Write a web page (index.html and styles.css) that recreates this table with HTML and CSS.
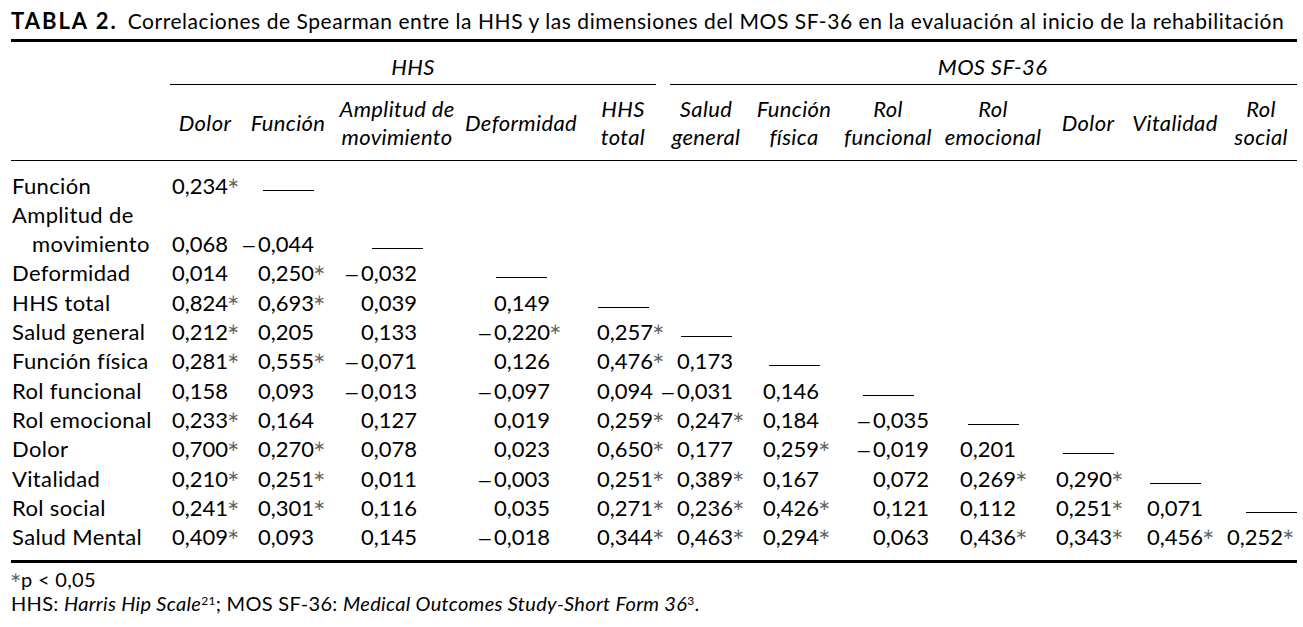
FILE: index.html
```html
<!DOCTYPE html>
<html lang="es">
<head>
<meta charset="utf-8">
<title>Tabla 2</title>
<link rel="stylesheet" href="styles.css">
</head>
<body>
<div class="page">
  <p class="title"><b>TABLA 2.</b> Correlaciones de Spearman entre la HHS y las dimensiones del MOS SF-36 en la evaluación al inicio de la rehabilitación</p>
  <table class="corr">
    <colgroup>
      <col class="c-label"><col class="c1"><col class="c2"><col class="c3"><col class="c4"><col class="c5"><col class="c6"><col class="c7"><col class="c8"><col class="c9"><col class="c10"><col class="c11"><col class="c12">
    </colgroup>
    <thead>
      <tr class="grp">
        <th></th>
        <th colspan="5" class="g-hhs"><div>HHS</div></th>
        <th colspan="7" class="g-mos"><div>MOS SF-36</div></th>
      </tr>
      <tr class="cols">
        <th></th>
        <th>Dolor</th>
        <th>Función</th>
        <th>Amplitud de<br>movimiento</th>
        <th>Deformidad</th>
        <th>HHS<br>total</th>
        <th>Salud<br>general</th>
        <th>Función<br>física</th>
        <th>Rol<br>funcional</th>
        <th>Rol<br>emocional</th>
        <th>Dolor</th>
        <th>Vitalidad</th>
        <th>Rol<br>social</th>
      </tr>
    </thead>
    <tbody>
      <tr class="first"><td>Función</td><td>0,234<span class="s">∗</span></td><td class="d"><span class="dash"></span></td><td></td><td></td><td></td><td></td><td></td><td></td><td></td><td></td><td></td><td></td></tr>
      <tr><td>Amplitud de</td><td></td><td></td><td></td><td></td><td></td><td></td><td></td><td></td><td></td><td></td><td></td><td></td></tr>
      <tr><td class="ind">movimiento</td><td>0,068</td><td><span class="m">–</span>0,044</td><td class="d"><span class="dash"></span></td><td></td><td></td><td></td><td></td><td></td><td></td><td></td><td></td><td></td></tr>
      <tr><td>Deformidad</td><td>0,014</td><td>0,250<span class="s">∗</span></td><td><span class="m">–</span>0,032</td><td class="d"><span class="dash"></span></td><td></td><td></td><td></td><td></td><td></td><td></td><td></td><td></td></tr>
      <tr><td>HHS total</td><td>0,824<span class="s">∗</span></td><td>0,693<span class="s">∗</span></td><td>0,039</td><td>0,149</td><td class="d"><span class="dash"></span></td><td></td><td></td><td></td><td></td><td></td><td></td><td></td></tr>
      <tr><td>Salud general</td><td>0,212<span class="s">∗</span></td><td>0,205</td><td>0,133</td><td><span class="m">–</span>0,220<span class="s">∗</span></td><td>0,257<span class="s">∗</span></td><td class="d"><span class="dash"></span></td><td></td><td></td><td></td><td></td><td></td><td></td></tr>
      <tr><td>Función física</td><td>0,281<span class="s">∗</span></td><td>0,555<span class="s">∗</span></td><td><span class="m">–</span>0,071</td><td>0,126</td><td>0,476<span class="s">∗</span></td><td>0,173</td><td class="d"><span class="dash"></span></td><td></td><td></td><td></td><td></td><td></td></tr>
      <tr><td>Rol funcional</td><td>0,158</td><td>0,093</td><td><span class="m">–</span>0,013</td><td><span class="m">–</span>0,097</td><td>0,094</td><td><span class="m">–</span>0,031</td><td>0,146</td><td class="d"><span class="dash"></span></td><td></td><td></td><td></td><td></td></tr>
      <tr><td>Rol emocional</td><td>0,233<span class="s">∗</span></td><td>0,164</td><td>0,127</td><td>0,019</td><td>0,259<span class="s">∗</span></td><td>0,247<span class="s">∗</span></td><td>0,184</td><td><span class="m">–</span>0,035</td><td class="d"><span class="dash"></span></td><td></td><td></td><td></td></tr>
      <tr><td>Dolor</td><td>0,700<span class="s">∗</span></td><td>0,270<span class="s">∗</span></td><td>0,078</td><td>0,023</td><td>0,650<span class="s">∗</span></td><td>0,177</td><td>0,259<span class="s">∗</span></td><td><span class="m">–</span>0,019</td><td>0,201</td><td class="d"><span class="dash"></span></td><td></td><td></td></tr>
      <tr><td>Vitalidad</td><td>0,210<span class="s">∗</span></td><td>0,251<span class="s">∗</span></td><td>0,011</td><td><span class="m">–</span>0,003</td><td>0,251<span class="s">∗</span></td><td>0,389<span class="s">∗</span></td><td>0,167</td><td>0,072</td><td>0,269<span class="s">∗</span></td><td>0,290<span class="s">∗</span></td><td class="d"><span class="dash"></span></td><td></td></tr>
      <tr><td>Rol social</td><td>0,241<span class="s">∗</span></td><td>0,301<span class="s">∗</span></td><td>0,116</td><td>0,035</td><td>0,271<span class="s">∗</span></td><td>0,236<span class="s">∗</span></td><td>0,426<span class="s">∗</span></td><td>0,121</td><td>0,112</td><td>0,251<span class="s">∗</span></td><td>0,071</td><td class="d"><span class="dash"></span></td></tr>
      <tr class="last"><td>Salud Mental</td><td>0,409<span class="s">∗</span></td><td>0,093</td><td>0,145</td><td><span class="m">–</span>0,018</td><td>0,344<span class="s">∗</span></td><td>0,463<span class="s">∗</span></td><td>0,294<span class="s">∗</span></td><td>0,063</td><td>0,436<span class="s">∗</span></td><td>0,343<span class="s">∗</span></td><td>0,456<span class="s">∗</span></td><td>0,252<span class="s">∗</span></td></tr>
    </tbody>
  </table>
  <div class="notes">
    <p><span class="fs">∗</span>p &lt; 0,05</p>
    <p>HHS: <i>Harris Hip Scale</i><sup>21</sup>; MOS SF-36: <i>Medical Outcomes Study-Short Form 36</i><sup>3</sup>.</p>
  </div>
</div>
</body>
</html>
```

FILE: styles.css
```css
html, body {
  margin: 0;
  padding: 0;
  background: #fff;
}

body {
  font-family: Lato, "Liberation Sans", sans-serif;
  color: #000;
}

.page {
  padding: 6px 0 0 11px;
  width: 1286px;
}

.title {
  margin: 0 0 4px 0;
  font-size: 21px;
  line-height: 29px;
  letter-spacing: 0.55px;
  white-space: nowrap;
}

.title b {
  font-weight: 700;
  font-size: 22px;
  letter-spacing: 2px;
  margin-right: 4px;
}

.corr {
  border-collapse: collapse;
  table-layout: fixed;
  width: 1286px;
  font-size: 22px;
  border-top: 3px solid #000;
  border-bottom: 3px solid #000;
}

.c-label { width: 156px; }
.c1 { width: 76px; }
.c2 { width: 90px; }
.c3 { width: 128px; }
.c4 { width: 120px; }
.c5 { width: 84px; }
.c6 { width: 82px; }
.c7 { width: 94px; }
.c8 { width: 94px; }
.c9 { width: 116px; }
.c10 { width: 74px; }
.c11 { width: 100px; }
.c12 { width: 72px; }

.corr th {
  font-weight: 400;
  font-style: italic;
  padding: 0;
  line-height: 28px;
  letter-spacing: 0.35px;
  text-align: center;
  vertical-align: middle;
  white-space: nowrap;
}

.grp th {
  padding-top: 11px;
}

.grp th div {
  border-bottom: 1.5px solid #000;
  padding-bottom: 3px;
}

.g-hhs { padding-left: 3px !important; padding-right: 9px !important; }
.g-mos { padding-left: 5px !important; }
.g-mos div { padding-left: 18px; }

.cols th {
  padding-top: 10px;
  padding-bottom: 9px;
  border-bottom: 1.5px solid #000;
}

.corr tbody tr {
  height: 29.33px;
}

.corr tbody tr.first {
  height: 39.33px;
}

.corr tbody tr.last {
  height: 39.5px;
}

.corr td {
  padding: 3px 0 0 0;
  line-height: 24px;
  white-space: nowrap;
  text-align: left;
  vertical-align: top;
}

.corr td:nth-child(1) { padding-left: 1px; letter-spacing: 0.35px; }
.corr td.ind { padding-left: 21px; }
.corr td:nth-child(2) { padding-left: 5px; }
.corr td:nth-child(3) { padding-left: 15px; }
.corr td:nth-child(4) { padding-left: 28px; }
.corr td:nth-child(5) { padding-left: 33px; }
.corr td:nth-child(6) { padding-left: 16px; }
.corr td:nth-child(7) { padding-left: 12px; }
.corr td:nth-child(8) { padding-left: 16px; }
.corr td:nth-child(9) { padding-left: 32px; }
.corr td:nth-child(10) { padding-left: 25px; }
.corr td:nth-child(11) { padding-left: 5px; }
.corr td:nth-child(12) { padding-left: 22px; }
.corr td:nth-child(13) { padding-left: 2px; }

.corr td.d {
  padding-left: 0;
  text-align: center;
}

.corr td.d:last-child {
  text-align: right;
}

.corr tr.first td { padding-top: 13px; }

.dash {
  display: inline-block;
  width: 51px;
  height: 1px;
  background: #000;
  vertical-align: 3px;
}

.m {
  display: inline-block;
  width: 15px;
  margin-left: -15px;
  line-height: 1;
  font-family: "Liberation Sans", sans-serif;
  font-size: 21px;
}

.s,
.fs {
  font-family: "DejaVu Sans", sans-serif;
  font-size: 15px;
  color: #666;
  line-height: 0;
  vertical-align: 6px;
  margin-left: -1px;
}

.fs {
  font-size: 14px;
  margin-left: -1px;
  margin-right: -1px;
  vertical-align: 5px;
}

.notes {
  margin-top: 4px;
  font-size: 20px;
  line-height: 24px;
  letter-spacing: 0.3px;
}

.notes p {
  margin: 0;
  white-space: nowrap;
}

.notes sup {
  font-size: 12px;
  line-height: 0;
  vertical-align: 6px;
}
```
